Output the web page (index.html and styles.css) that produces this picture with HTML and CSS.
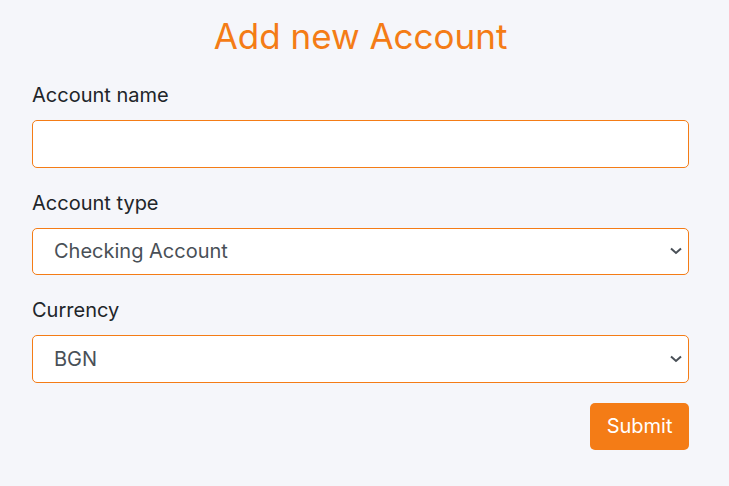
FILE: index.html
```html
<!DOCTYPE html>
<html lang="en">
<head>
<meta charset="utf-8">
<title>Add new Account</title>
<link rel="stylesheet" href="styles.css">
</head>
<body>
<main class="page">
  <h3 class="title">Add new Account</h3>
  <form class="form">
    <div class="group">
      <label class="label" for="name">Account name</label>
      <input class="control" id="name" type="text">
    </div>
    <div class="group">
      <label class="label" for="type">Account type</label>
      <select class="control select" id="type">
        <option>Checking Account</option>
      </select>
    </div>
    <div class="group">
      <label class="label" for="cur">Currency</label>
      <select class="control select" id="cur">
        <option>BGN</option>
      </select>
    </div>
    <div class="actions">
      <button class="btn" type="button">Submit</button>
    </div>
  </form>
</main>
</body>
</html>
```

FILE: styles.css
```css
html, body {
  margin: 0;
  padding: 0;
  background: #f5f6fa;
}
body {
  font-family: Inter, "Noto Sans", sans-serif;
  color: #212529;
  font-size: 20px;
  line-height: 30px;
}
.page {
  width: 657px;
  margin-left: 32px;
  padding-top: 15px;
}
.title {
  margin: 0 0 23px;
  text-align: center;
  font-weight: 400;
  font-size: 35px;
  line-height: 42px;
  color: #f47c16;
}
.form {
  display: flex;
  flex-direction: column;
}
.group {
  display: flex;
  flex-direction: column;
  margin-bottom: 20px;
}
.label {
  display: block;
  margin-bottom: 10px;
  font-size: 20px;
  line-height: 30px;
  color: #212529;
}
.control {
  box-sizing: border-box;
  width: 100%;
  height: 47.5px;
  margin: 0;
  padding: 0 20px;
  border: 1px solid #f47c16;
  border-radius: 5px;
  background-color: #fff;
  font-family: Inter, "Noto Sans", sans-serif;
  font-size: 20px;
  color: #495057;
  outline: none;
}
.select {
  appearance: none;
  -webkit-appearance: none;
  padding-left: 21px;
  background-image: url("data:image/svg+xml,%3Csvg xmlns='http://www.w3.org/2000/svg' viewBox='0 0 12 8'%3E%3Cpath d='M1 1.5l5 4.5 5-4.5' fill='none' stroke='%23495057' stroke-width='2'/%3E%3C/svg%3E");
  background-repeat: no-repeat;
  background-size: 12px 8px;
  background-position: right 6px center;
}
.actions {
  display: flex;
  justify-content: flex-end;
}
.btn {
  height: 47.5px;
  padding: 0 16.5px;
  border: none;
  border-radius: 5px;
  background: #f47c16;
  color: #fff;
  font-family: Inter, "Noto Sans", sans-serif;
  font-size: 20px;
  cursor: pointer;
}
```
